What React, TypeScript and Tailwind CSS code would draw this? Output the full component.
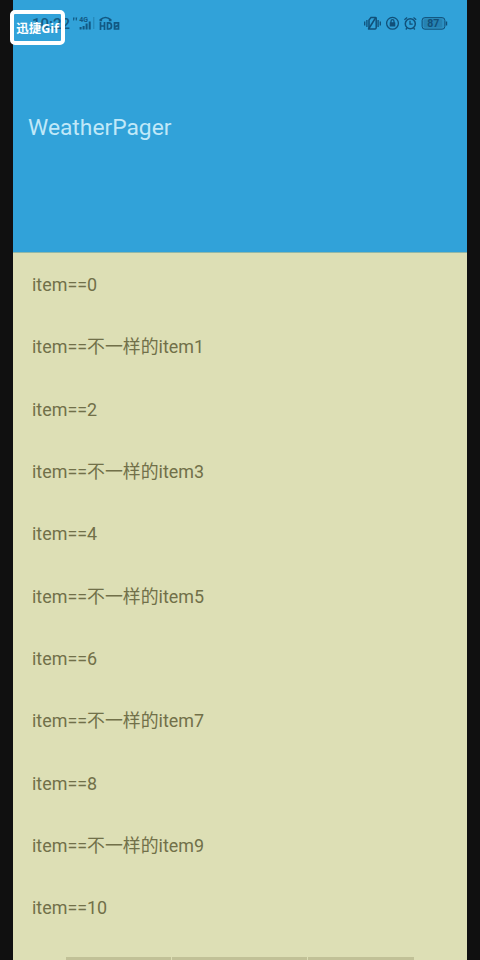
import React from "react";

const items = Array.from({ length: 11 }, (_, i) =>
  i % 2 === 0 ? `item==${i}` : `item==不一样的item${i}`
);

function Signal() {
  return (
    <svg width="48" height="18" viewBox="0 0 48 18" className="ml-[2px] shrink-0" fill="#0f5179">
      <g opacity="0.9">
        <path d="M0 3.500h1.600l-.5 3H.2zM2.600 3.500h1.600l-.5 3h-.9z" />
        <text x="6.200" y="7.600" fontSize="7" fontWeight="700" fontFamily="Roboto, sans-serif">4G</text>
        <path d="M6.600 13h2v2.500h-2zM9.600 12h2v3.500h-2zM12.600 9.500h2v6h-2zM15.700 7.500h2v8h-2z" />
        <path d="M20.300 3h1v12h-1z" opacity="0.45" />
        <path d="M26.500 7.200V5.300Q32.500 .2 38.500 5.300V7.200H35.900V5.400Q32.500 3.200 29.100 5.400V7.200Z" />
        <g fill="none" stroke="#0f5179" strokeWidth="1.700">
          <path d="M27.500 8v8M31.500 8v8M27.500 12h4M34.500 8.900v6.100h1.400q2.600 0 2.600-3t-2.600-3.100zM41.500 8.900h4v6.100h-4zM42 13l3.500-2" />
        </g>
      </g>
    </svg>
  );
}

function StatusIcons() {
  return (
    <svg width="84" height="18" viewBox="0 0 84 18" className="shrink-0" fill="none" stroke="#115079" strokeWidth="1.3">
      <path d="M.7 7.500v4M2.900 6v7M14.100 6v7M16.300 7.500v4" />
      <path d="M7 3.600h4.200q1 0 1 1v9q0 1.300-1 1.300H6q-1 0-1-1V6z" strokeWidth="1.500" />
      <path d="M4.300 15.500 12 3.200" strokeWidth="1.600" />
      <circle cx="28.500" cy="9.300" r="5.900" />
      <rect x="25.700" y="8.300" width="5.600" height="4.100" rx=".5" fill="#115079" stroke="none" />
      <path d="M27 9V7.200a1.500 1.500 0 0 1 3 0V9" />
      <circle cx="46.300" cy="9.700" r="5" strokeWidth="1.500" />
      <path d="M46 6.800v3.400h2.700M40.400 5.800l2.700-2.200M52.200 5.800l-2.700-2.200M43 14l-1.200 1.500M49.600 14l1.200 1.500" />
      <rect x="58.100" y="3.600" width="22.800" height="11.600" rx="2.800" fill="#2d91c3" strokeWidth="1" />
      <rect x="59.800" y="5.200" width="18.400" height="8.400" rx="1.300" fill="#2682b2" stroke="none" />
      <path d="M82.500 7.500v4" strokeWidth="1.400" />
      <text x="63.200" y="13.200" fontSize="10.500" fontWeight="700" fontFamily="Roboto, sans-serif" fill="#115079" stroke="none">87</text>
    </svg>
  );
}

export default function App() {
  return (
    <div className="relative flex h-[960px] w-[480px] overflow-hidden bg-[#101010] pr-[13px] pl-[13px] font-['Roboto','Noto_Sans_CJK_SC',sans-serif]">
      <main className="flex w-full flex-col bg-[#dddfb5]">
        <header className="h-[253px] shrink-0 border-b border-[#91b8a8] bg-[#31a2d9]">
          <div className="flex h-[46px] items-center pr-[19px] pl-[19px]">
            <span className="w-[39px] pt-[2px] text-[15px] leading-none font-medium text-[#155b83]">10:22</span>
            <Signal />
            <div className="flex-1" />
            <StatusIcons />
          </div>
          <h1 className="mt-[66px] ml-[15px] text-[22.8px] leading-[32px] font-normal text-[#c0e8f8]">
            WeatherPager
          </h1>
        </header>
        <ul className="flex flex-col pt-[1.4px] pl-[19px] text-[17.9px] text-[#717049]">
          {items.map((item) => (
            <li key={item} className="flex h-[62.33px] items-center whitespace-nowrap">
              {item}
            </li>
          ))}
        </ul>
        <div className="mt-auto ml-[53px] flex h-[3px] shrink-0 gap-[1px]">
          <span className="w-[105px] bg-[#c1c197]" />
          <span className="w-[135px] bg-[#c1c197]" />
          <span className="w-[106px] bg-[#c1c197]" />
        </div>
      </main>
      <div className="absolute top-[10px] left-[10px] flex h-[35px] w-[55px] items-center justify-center rounded-[5px] border-4 border-white pt-[3px] font-['Open_Sans','Noto_Sans_CJK_SC',sans-serif] text-[12.5px] leading-none font-bold whitespace-nowrap text-white">
        迅捷Gif
      </div>
    </div>
  );
}
